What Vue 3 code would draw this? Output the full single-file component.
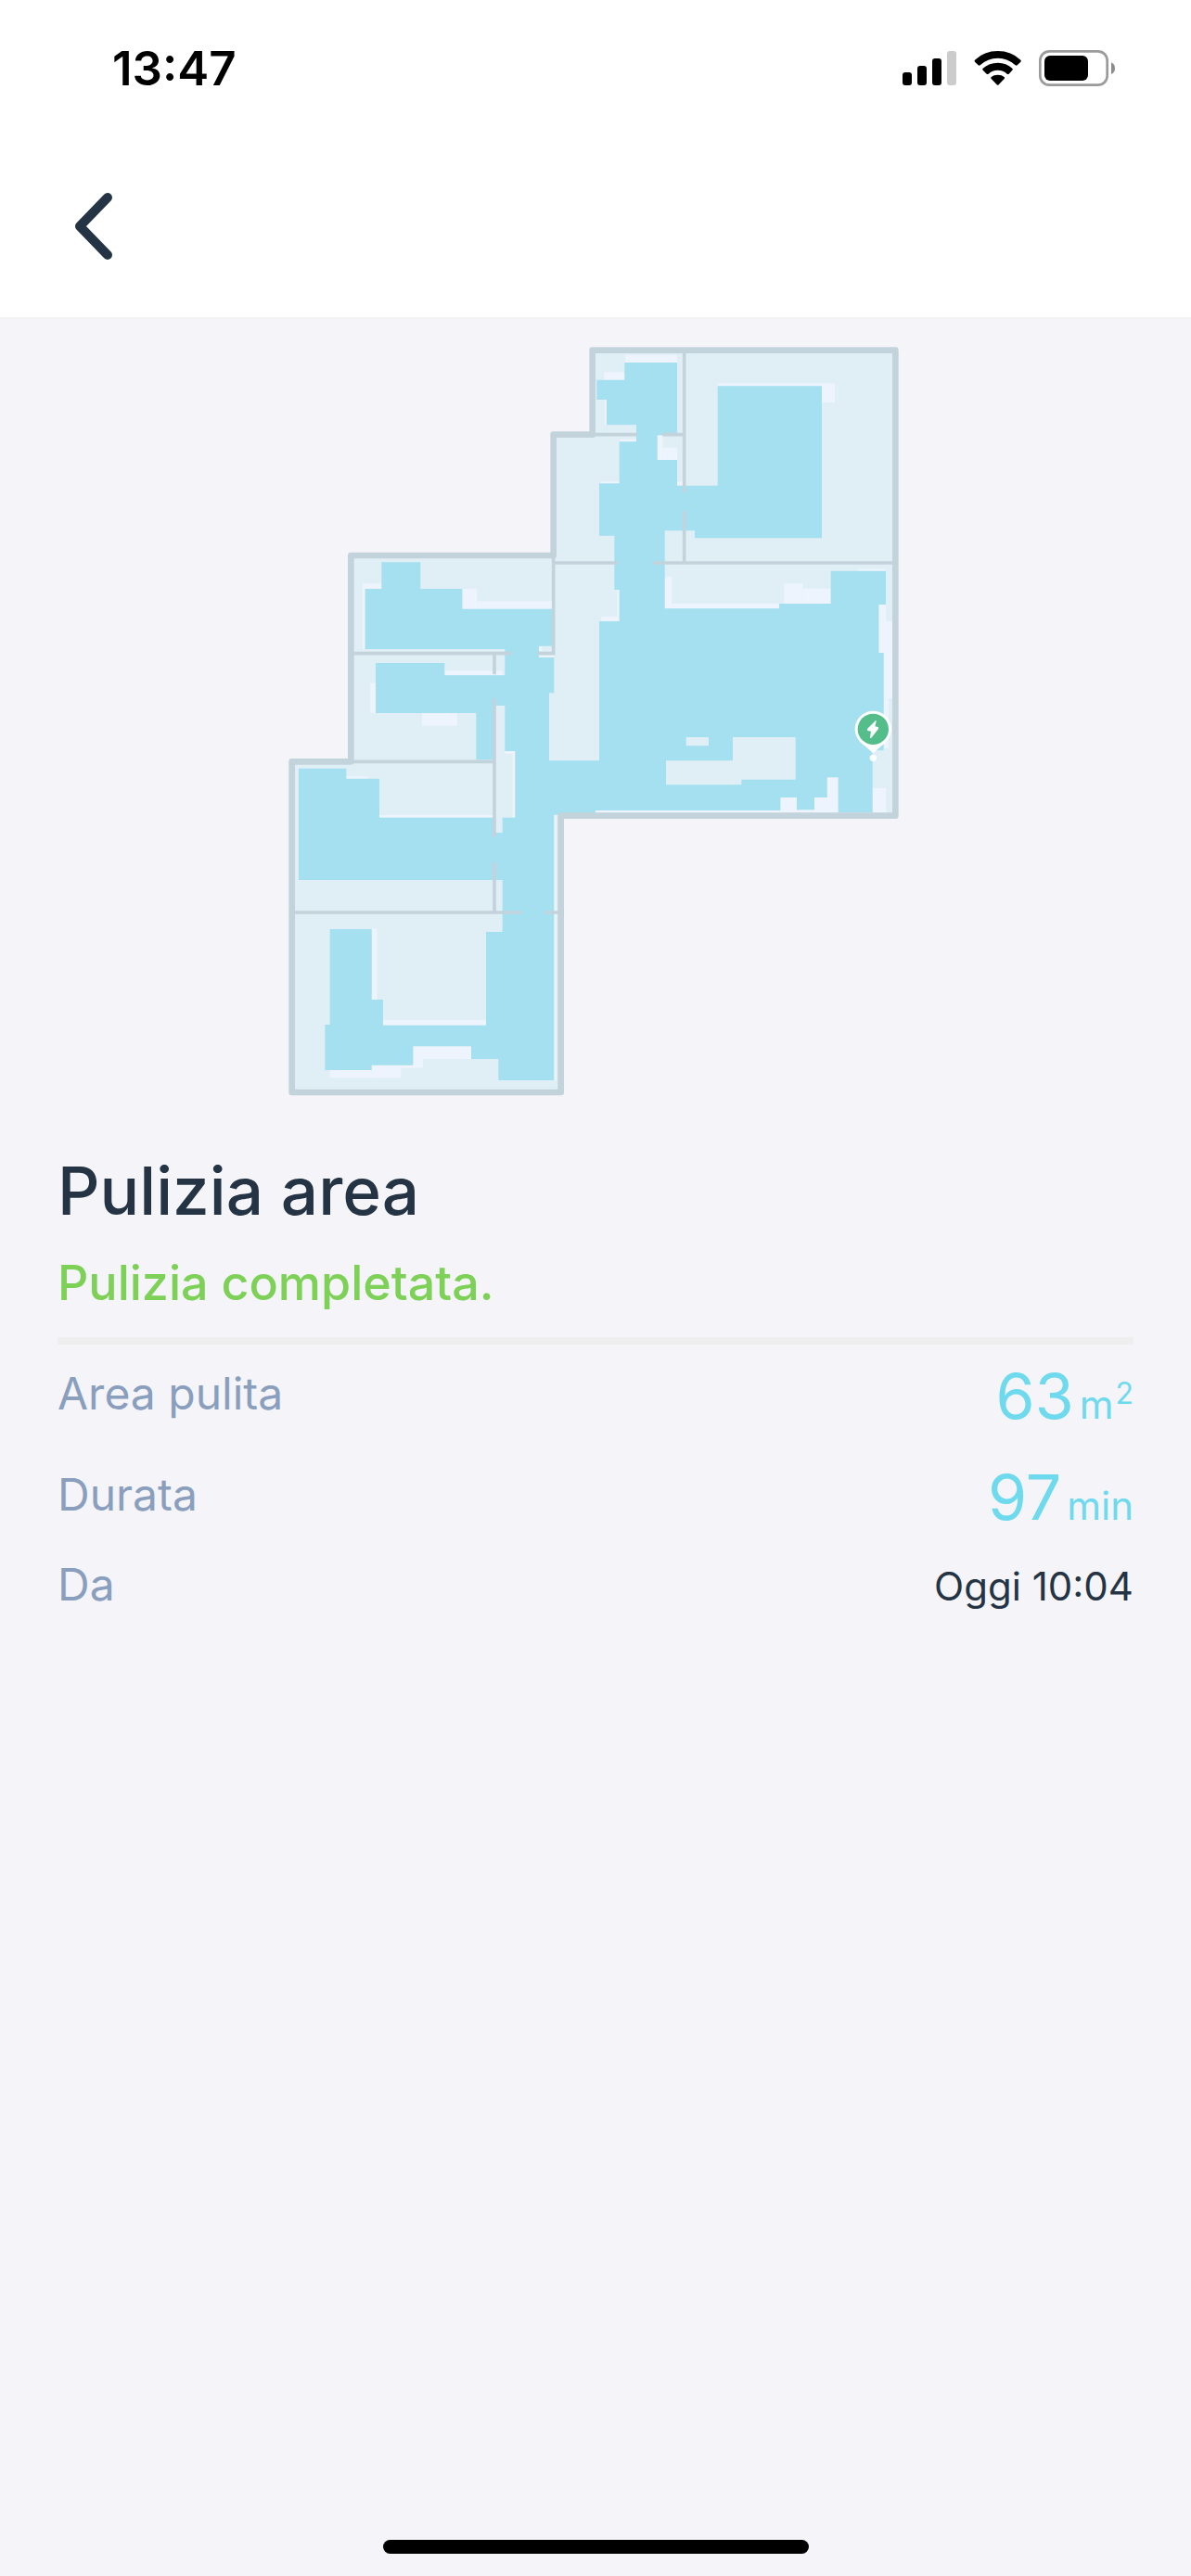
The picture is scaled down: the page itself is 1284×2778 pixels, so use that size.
<script setup>
const details = [
  { label: 'Area pulita', value: '63', unit: 'm', sup: '2' },
  { label: 'Durata', value: '97', unit: 'min' },
]

// under-swept edges along the cleaned area: [x, y, width, height]
const patches = [
  [1123, 68, 167, 30], [1054, 124, 70, 30], [1055, 213, 10, 82], [1062, 288, 96, 8],
  [1226, 328, 17, 80], [1243, 368, 47, 40], [1290, 478, 18, 13], [1043, 478, 60, 8],
  [1105, 341, 53, 8], [1421, 160, 339, 10], [1758, 160, 42, 62],
  [1250, 785, 23, 104], [1250, 873, 370, 16], [1636, 808, 61, 65], [1697, 824, 90, 49],
  [1875, 760, 90, 8], [1942, 876, 24, 156], [1958, 930, 30, 250], [1958, 1180, 16, 160],
  [1922, 1470, 44, 80], [1026, 1540, 785, 10], [1624, 1500, 53, 50], [1734, 1500, 77, 50],
  [1775, 1435, 36, 70], [1096, 828, 8, 102], [1045, 914, 60, 16],
  [843, 1010, 10, 16], [843, 1040, 49, 8], [891, 1556, 8, 860],
  [273, 808, 61, 17], [273, 808, 8, 212], [595, 825, 48, 65], [643, 865, 243, 25],
  [298, 1130, 17, 97], [538, 1090, 187, 15], [465, 1227, 114, 41], [220, 1432, 70, 8],
  [327, 1557, 366, 8], [758, 1350, 8, 215], [733, 1350, 33, 8],
  [302, 1924, 17, 230], [339, 2220, 333, 17], [436, 2305, 188, 41], [436, 2346, 32, 29],
  [302, 2366, 134, 9], [302, 2366, 95, 41], [167, 2382, 135, 25],
]
</script>

<template>
  <div class="screen">
    <header class="header">
      <div class="status-bar">
        <span class="time">13:47</span>
        <svg class="status-icons" viewBox="90 60 699 135" aria-hidden="true">
          <rect x="99" y="141" width="30" height="42" rx="9" />
          <rect x="147" y="120" width="30" height="63" rx="9" />
          <rect x="195" y="96" width="30" height="87" rx="9" />
          <rect x="243" y="72" width="30" height="111" rx="9" fill="#cccccc" />
          <path d="M333 101Q363 72 407 72T481 101Q484 104 481 107L470 118Q467 120 464 118Q440 95 407 95T350 118Q347 120 344 118L333 107Q330 104 333 101Z" />
          <path d="M359 128Q379 110 407 110T454 128Q457 131 454 134L443 146Q440 148 437 146Q425 134 407 134T377 146Q374 148 371 146L359 134Q356 131 359 128Z" />
          <path d="M386 156Q394 149 407 149T428 156Q431 159 428 162L410 181Q407 184 404 181L386 162Q383 159 386 156Z" />
          <rect x="544" y="73" width="217" height="109" rx="30" fill="none" stroke="#9b9b9b" stroke-width="8" />
          <rect x="558" y="87" width="141" height="81" rx="18" />
          <path d="M774 109Q786 115 786 128T774 147Z" fill="#8c8c8c" />
        </svg>
      </div>
      <nav class="nav">
        <button class="back" type="button" aria-label="Indietro">
          <svg viewBox="0 0 42 72" aria-hidden="true">
            <path d="M36 5 6 36l30 31" />
          </svg>
        </button>
      </nav>
    </header>

    <main class="content">
      <svg class="map" viewBox="6 0 2040 2490" aria-hidden="true">
        <path class="room" d="M1016 53H1996V1559H914V2454H44V1384H235V717H890V326H1016Z" />
        <g class="patch">
          <rect v-for="(p, i) in patches" :key="i" :x="p[0]" :y="p[1]" :width="p[2]" :height="p[3]" />
        </g>
        <path
          class="cleaned"
          d="M1120 93H1290V328H1226V408H1290V491H1421V169H1758V661H1347V637H1250V889H1620V873H1787V767H1965V876H1942V1032H1958V1348H1922V1549H1811V1435H1775V1500H1734V1540H1677V1500H1624V1542H1026V1556H892V2415H712V2346H624V2305H436V2366H302V2382H151V2235H167V1926H302V2154H339V2237H672V1935H725V1767H66V1406H220V1439H327V1565H699V1614H725V1565H766V1350H733V1203H699V1378H640V1227H315V1065H538V1105H733V1020H281V825H334V739H460V825H595V890H886V1010H843V1047H892V1162H876V1381H1038V930H1103V828H1087V653H1038V484H1103V349H1158V295H1062V213H1030V149H1120Z"
        />
        <path class="room" d="M1319 1305h73v28h-73ZM1470 1305H1673V1442H1498V1459H1254V1381H1470Z" />
        <path
          class="wall"
          d="M1313 53V512M1313 574V741M1016 326H1160M1243 326H1313M890 741H1100M1212 741H1996M890 717V1039M235 1034H754M838 1034H895M699 1034V1102M699 1180V1628M699 1710V1872M235 1384H699M44 1872H788M862 1872H914"
        />
        <path class="outline" d="M1016 53H1996V1559H914V2454H44V1384H235V717H890V326H1016Z" />
        <g class="dock">
          <path fill="#fff" d="M1880 1318L1919 1352Q1924 1360 1929 1352L1968 1318Z" />
          <circle cx="1924" cy="1279" r="59" fill="#fff" />
          <circle cx="1924" cy="1279" r="50" fill="#54be8a" />
          <path fill="#fff" d="M1932 1251L1905 1278Q1903 1283 1907 1284L1917 1286L1914 1305Q1914 1310 1918 1307L1941 1278Q1943 1274 1939 1272L1930 1270L1934 1254Q1934 1250 1932 1251Z" />
          <circle cx="1924" cy="1372" r="11" fill="#fff" />
        </g>
      </svg>

      <section class="summary">
        <h1 class="title">Pulizia area</h1>
        <p class="state">Pulizia completata.</p>
        <dl class="details">
          <div v-for="item in details" :key="item.label" class="row">
            <dt>{{ item.label }}</dt>
            <dd class="metric">
              {{ item.value }}<span class="unit">{{ item.unit }}<sup v-if="item.sup">{{ item.sup }}</sup></span>
            </dd>
          </div>
          <div class="row row-date">
            <dt>Da</dt>
            <dd>Oggi 10:04</dd>
          </div>
        </dl>
      </section>
    </main>

    <footer class="footer">
      <div class="home-indicator"></div>
    </footer>
  </div>
</template>

<style>
body {
  margin: 0;
  background: #f4f4f9;
}
</style>

<style scoped>
.screen {
  display: flex;
  flex-direction: column;
  min-height: 100vh;
  background: #f4f4f9;
  color: #243444;
  font-family: Inter, "Liberation Sans", sans-serif;
}

.header {
  background: #fff;
  border-bottom: 2px solid #f3f3f5;
}

.status-bar {
  display: flex;
  align-items: center;
  justify-content: space-between;
  height: 146px;
  padding: 0 81px 0 121px;
}

.time {
  color: #000;
  font-size: 51px;
  font-weight: 600;
}

.status-icons {
  width: 233px;
  height: 45px;
}

.nav {
  display: flex;
  align-items: center;
  height: 196px;
  padding: 0 60px;
}

.back {
  display: flex;
  padding: 20px;
  border: 0;
  background: none;
  cursor: pointer;
}

.back svg {
  width: 42px;
  height: 72px;
  fill: none;
  stroke: #243444;
  stroke-width: 10;
  stroke-linecap: round;
  stroke-linejoin: round;
}

.content {
  display: flex;
  flex: 1;
  flex-direction: column;
  padding-top: 16px;
}

.map {
  align-self: center;
  width: 680px;
  max-width: 100%;
}

.room {
  fill: #e0eff6;
}

.patch {
  fill: #edf4fe;
}

.cleaned {
  fill: #a4e0ef;
}

.wall {
  fill: none;
  stroke: #c3d3db;
  stroke-width: 11;
}

.outline {
  fill: none;
  stroke: #c3d3db;
  stroke-width: 20;
  stroke-linejoin: round;
}

.summary {
  padding: 48px 62px 0;
}

.title {
  margin: 0;
  font-size: 71px;
  font-weight: 500;
  line-height: 92px;
}

.state {
  margin: 0;
  padding: 20px 0 24px;
  border-bottom: 8px solid #eeeeef;
  color: #7dd157;
  font-size: 52px;
  font-weight: 500;
  line-height: 68px;
}

.details {
  margin: 0;
}

.row {
  display: flex;
  align-items: center;
  justify-content: space-between;
  height: 109px;
}

.row-date {
  height: 84px;
}

dt {
  padding-bottom: 4px;
  color: #8a9fbe;
  font-size: 48px;
  font-weight: 400;
}

dd {
  margin: 0;
  font-size: 42px;
}

.metric {
  color: #6fdaee;
  font-size: 68px;
  font-weight: 400;
}

.unit {
  margin-left: 6px;
  font-size: 42px;
}

sup {
  margin-left: 2px;
  font-size: 32px;
  line-height: 0;
  vertical-align: 16px;
}

.footer {
  display: flex;
  justify-content: center;
  padding-bottom: 24px;
}

.home-indicator {
  width: 459px;
  height: 15px;
  border-radius: 8px;
  background: #000;
}
</style>
